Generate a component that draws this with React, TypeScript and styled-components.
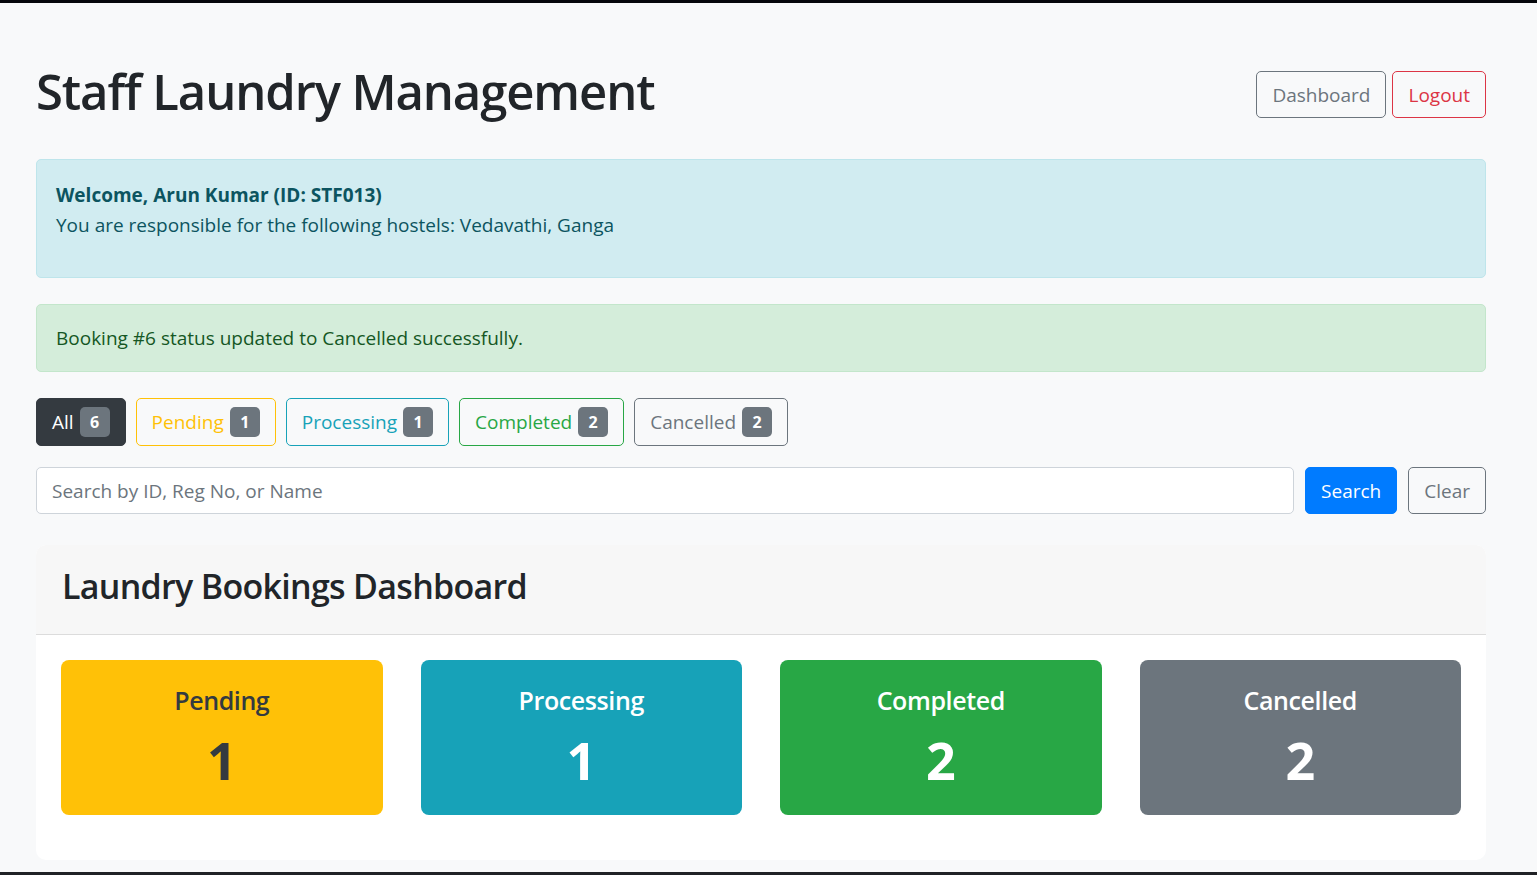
import React from "react";
import styled, { createGlobalStyle } from "styled-components";

const GlobalStyle = createGlobalStyle`
    html, body {
        margin: 0;
        padding: 0;
        background: #f8f9fa;
    }
    body {
        font-family: "Open Sans", "Noto Sans", sans-serif;
        font-size: 19px;
        line-height: 1.5;
        color: #212529;
        min-height: 875px;
    }
    * {
        box-sizing: border-box;
    }
`;

type Variant = "dark" | "warning" | "info" | "success" | "secondary";

const COLORS: Record<Variant, string> = {
    dark: "#343a40",
    warning: "#ffc107",
    info: "#17a2b8",
    success: "#28a745",
    secondary: "#6c757d"
};

const counts = [
    { label: "Pending", value: 1, variant: "warning" as Variant },
    { label: "Processing", value: 1, variant: "info" as Variant },
    { label: "Completed", value: 2, variant: "success" as Variant },
    { label: "Cancelled", value: 2, variant: "secondary" as Variant }
];

export default function App() {
    return (
        <>
            <GlobalStyle />
            <TopBar />
            <Page>
                <Header>
                    <Title>Staff Laundry Management</Title>
                    <HeaderActions>
                        <OutlineButton $color="#6c757d">Dashboard</OutlineButton>
                        <OutlineButton $color="#dc3545">Logout</OutlineButton>
                    </HeaderActions>
                </Header>

                <Alert $bg="#d1ecf1" $border="#bee5eb" $color="#0c5460" $tall>
                    <strong>Welcome, Arun Kumar (ID: STF013)</strong>
                    <br />
                    You are responsible for the following hostels: Vedavathi, Ganga
                </Alert>

                <Alert $bg="#d4edda" $border="#c3e6cb" $color="#155724">
                    Booking #6 status updated to Cancelled successfully.
                </Alert>

                <FilterRow>
                    <FilterButton $color={COLORS.dark} $active>
                        All <Badge>6</Badge>
                    </FilterButton>
                    {counts.map((c) => (
                        <FilterButton key={c.label} $color={COLORS[c.variant]}>
                            {c.label} <Badge>{c.value}</Badge>
                        </FilterButton>
                    ))}
                </FilterRow>

                <SearchRow>
                    <SearchInput placeholder="Search by ID, Reg No, or Name" />
                    <PrimaryButton>Search</PrimaryButton>
                    <OutlineButton $color="#6c757d">Clear</OutlineButton>
                </SearchRow>

                <Card>
                    <CardHeader>
                        <CardTitle>Laundry Bookings Dashboard</CardTitle>
                    </CardHeader>
                    <CardBody>
                        <StatGrid>
                            {counts.map((c) => (
                                <StatBox key={c.label} $bg={COLORS[c.variant]} $dark={c.variant === "warning"}>
                                    <StatLabel>{c.label}</StatLabel>
                                    <StatValue>{c.value}</StatValue>
                                </StatBox>
                            ))}
                        </StatGrid>
                    </CardBody>
                </Card>
            </Page>
            <BottomLine />
        </>
    );
}

const TopBar = styled.div`
    height: 3px;
    background: #05070b;
`;

const BottomLine = styled.div`
    position: fixed;
    left: 0;
    right: 0;
    bottom: 0;
    height: 3px;
    background: #202226;
`;

const Page = styled.div`
    padding: 0 51px 0 36px;
`;

const Header = styled.div`
    display: flex;
    align-items: center;
    justify-content: space-between;
    height: 47px;
    margin-top: 68px;
    margin-bottom: 41px;
`;

const Title = styled.h1`
    margin: 0;
    font-size: 49px;
    font-weight: 600;
    line-height: 47px;
    color: #212529;
    letter-spacing: -1.1px;
    position: relative;
    top: -3px;
`;

const HeaderActions = styled.div`
    display: flex;
    gap: 6px;
`;

const OutlineButton = styled.button<{ $color: string }>`
    font-family: inherit;
    font-size: 19px;
    line-height: 30px;
    height: 47px;
    padding: 7px 15px;
    background: transparent;
    border: 1px solid ${(p) => p.$color};
    color: ${(p) => p.$color};
    border-radius: 5px;
    cursor: pointer;
`;

const PrimaryButton = styled.button`
    font-family: inherit;
    font-size: 19px;
    line-height: 30px;
    height: 47px;
    padding: 7px 15px;
    background: #007bff;
    border: 1px solid #007bff;
    color: #fff;
    border-radius: 5px;
    cursor: pointer;
`;

const Alert = styled.div<{ $bg: string; $border: string; $color: string; $tall?: boolean }>`
    background: ${(p) => p.$bg};
    border: 1px solid ${(p) => p.$border};
    color: ${(p) => p.$color};
    border-radius: 5px;
    padding: ${(p) => (p.$tall ? "20px 19px 37px" : "18px 19px")};
    margin-bottom: 26px;
    line-height: 30px;

    strong {
        font-weight: 700;
    }
`;

const FilterRow = styled.div`
    display: flex;
    gap: 10px;
    margin-bottom: 21px;
`;

const FilterButton = styled.button<{ $color: string; $active?: boolean }>`
    display: flex;
    align-items: center;
    gap: 6px;
    font-family: inherit;
    font-size: 19px;
    height: 48px;
    padding: 0 15px;
    border-radius: 5px;
    border: 1px solid ${(p) => p.$color};
    background: ${(p) => (p.$active ? p.$color : "transparent")};
    color: ${(p) => (p.$active ? "#fff" : p.$color)};
    cursor: pointer;
`;

const Badge = styled.span`
    display: inline-flex;
    align-items: center;
    justify-content: center;
    min-width: 30px;
    height: 30px;
    padding: 0 8px;
    border-radius: 5px;
    background: #6c757d;
    color: #fff;
    font-size: 16px;
    font-weight: 700;
`;

const SearchRow = styled.div`
    display: flex;
    gap: 11px;
    margin-bottom: 31px;
`;

const SearchInput = styled.input`
    flex: 1;
    height: 47px;
    padding: 0 15px;
    font-family: inherit;
    font-size: 19px;
    color: #495057;
    background: #fff;
    border: 1px solid #ced4da;
    border-radius: 5px;

    &::placeholder {
        color: #6c757d;
    }
`;

const Card = styled.div`
    background: #fff;
    border-radius: 10px;
    overflow: hidden;
`;

const CardHeader = styled.div`
    background: #f7f7f7;
    border-bottom: 1px solid #dcdcdc;
    height: 90px;
    display: flex;
    align-items: center;
    padding: 0 26px 6px;
`;

const CardTitle = styled.h3`
    margin: 0;
    font-size: 34px;
    font-weight: 600;
    color: #212529;
    letter-spacing: -0.7px;
`;

const CardBody = styled.div`
    padding: 25px 25px 45px;
`;

const StatGrid = styled.div`
    display: grid;
    grid-template-columns: repeat(4, 1fr);
    column-gap: 38px;
`;

const StatBox = styled.div<{ $bg: string; $dark?: boolean }>`
    height: 155px;
    background: ${(p) => p.$bg};
    color: ${(p) => (p.$dark ? "#343a40" : "#fff")};
    border-radius: 8px;
    display: flex;
    flex-direction: column;
    align-items: center;
    padding-top: 23px;
`;

const StatLabel = styled.div`
    font-size: 25px;
    font-weight: 600;
    line-height: 34px;
    letter-spacing: -0.4px;
`;

const StatValue = styled.div`
    font-size: 52px;
    font-weight: 700;
    line-height: 64px;
    margin-top: 11px;
`;
